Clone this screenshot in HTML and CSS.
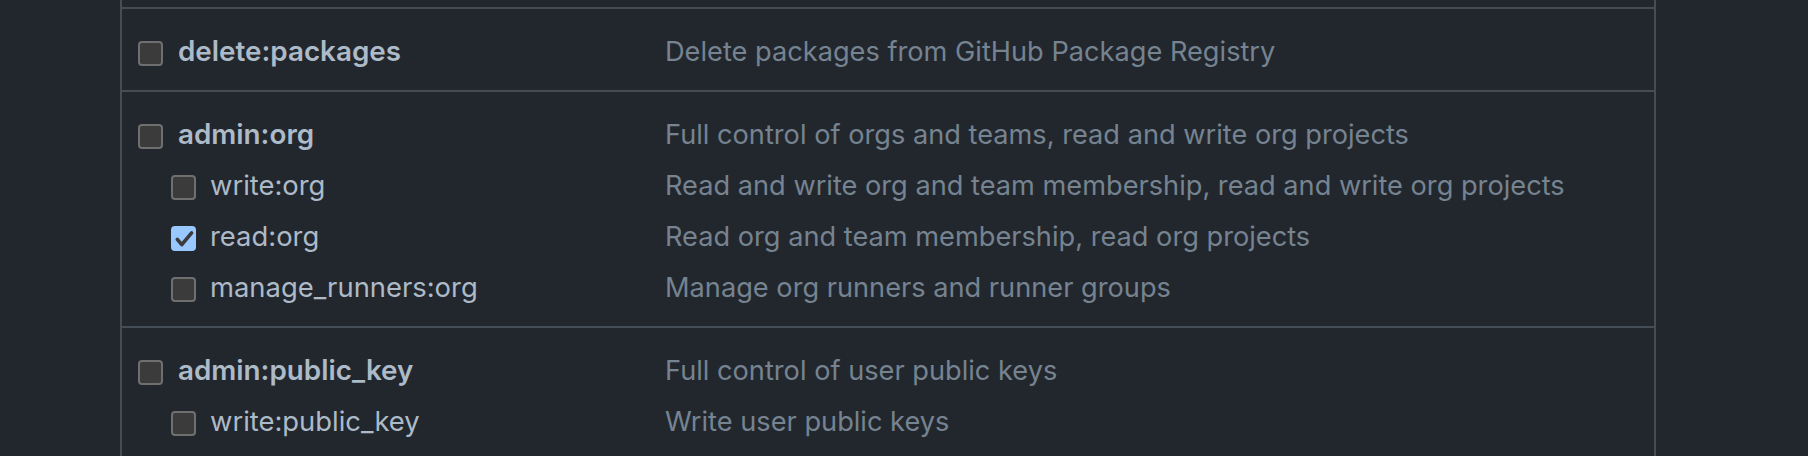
FILE: index.html
```html
<!DOCTYPE html>
<html lang="en">
<head>
<meta charset="utf-8">
<title>Token scopes</title>
<link rel="stylesheet" href="styles.css">
</head>
<body>
<div class="scopes">
  <div class="group">
    <div class="row">
      <label class="name top"><span class="box"></span><strong>delete:packages</strong></label>
      <span class="desc">Delete packages from GitHub Package Registry</span>
    </div>
  </div>
  <div class="group">
    <div class="row">
      <label class="name top"><span class="box"></span><strong>admin:org</strong></label>
      <span class="desc">Full control of orgs and teams, read and write org projects</span>
    </div>
    <div class="row">
      <label class="name sub"><span class="box"></span>write:org</label>
      <span class="desc">Read and write org and team membership, read and write org projects</span>
    </div>
    <div class="row">
      <label class="name sub"><span class="box checked"><svg viewBox="0 0 25 25" width="25" height="25"><path d="M6.3 13.3 L10.8 18.6 L20.6 6.8" fill="none" stroke="#3b3b3b" stroke-width="3.6" stroke-linecap="round" stroke-linejoin="round"/></svg></span>read:org</label>
      <span class="desc">Read org and team membership, read org projects</span>
    </div>
    <div class="row">
      <label class="name sub"><span class="box"></span>manage_runners:org</label>
      <span class="desc">Manage org runners and runner groups</span>
    </div>
  </div>
  <div class="group">
    <div class="row">
      <label class="name top"><span class="box"></span><strong>admin:public_key</strong></label>
      <span class="desc">Full control of user public keys</span>
    </div>
    <div class="row">
      <label class="name sub"><span class="box"></span>write:public_key</label>
      <span class="desc">Write user public keys</span>
    </div>
  </div>
</div>
</body>
</html>
```
FILE: styles.css
```css
html, body {
  margin: 0;
  padding: 0;
  background: #22272e;
}
body {
  font-family: Inter, "Noto Sans", "Liberation Sans", sans-serif;
  color: #adbac7;
  overflow: hidden;
  height: 456px;
}
.scopes {
  margin-left: 120px;
  padding-top: 7px;
  width: 1536px;
  min-height: 449px;
  box-sizing: border-box;
  border-left: 2px solid #444c56;
  border-right: 2px solid #444c56;
}
.group {
  border-top: 2px solid #444c56;
  padding: 15px 0;
}
.row {
  display: grid;
  grid-template-columns: 543px 1fr;
  height: 51px;
  line-height: 55px;
}
.name {
  display: flex;
  align-items: flex-start;
  gap: 14px;
  white-space: nowrap;
  font-size: 27.4px;
}
.name.top {
  padding-left: 16px;
}
.name.top .box {
  margin-right: 1px;
}
.name.sub {
  padding-left: 49px;
}
.name strong {
  font-weight: 600;
  font-size: 27.8px;
}
.box {
  flex: none;
  width: 25px;
  height: 25px;
  margin-top: 17px;
  box-sizing: border-box;
  border: 2px solid #6f6f6f;
  border-radius: 4px;
  background: #3b3b3b;
  display: flex;
  align-items: center;
  justify-content: center;
}
.box.checked {
  border: none;
  background: #99c8ff;
}
.box svg {
  display: block;
}
.desc {
  color: #768390;
  white-space: nowrap;
  font-size: 27.2px;
}
```
